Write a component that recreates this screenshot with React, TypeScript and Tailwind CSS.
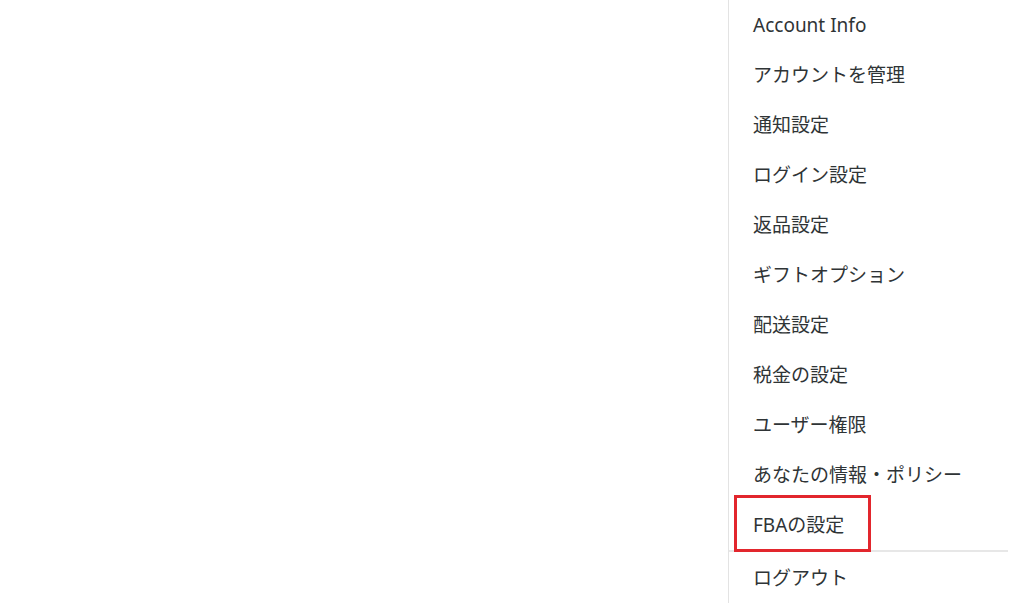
import React from "react";

const items = [
  "Account Info",
  "アカウントを管理",
  "通知設定",
  "ログイン設定",
  "返品設定",
  "ギフトオプション",
  "配送設定",
  "税金の設定",
  "ユーザー権限",
  "あなたの情報・ポリシー",
  "FBAの設定",
];

const App = () => {
  return (
    <div
      className="w-[1024px] h-[603px] overflow-hidden bg-white flex justify-end"
      style={{ fontFamily: '"Noto Sans", "Noto Sans CJK JP", sans-serif' }}
    >
      <nav className="w-[280px] mr-[16px] border-l border-[#e3e3e3] text-[19px] text-[#2f3436]">
        {items.map((label) => (
          <div key={label} className="relative h-[50px] flex items-center pl-[24px]">
            {label === "FBAの設定" && (
              // annotation box around the highlighted item
              <span className="absolute left-[5px] top-[-5px] w-[137px] h-[57px] border-[3px] border-[#e2262d]" />
            )}
            {label}
          </div>
        ))}
        <div className="h-[2px] bg-[#e7e7e7]" />
        <div className="h-[52px] flex items-center pl-[24px]">ログアウト</div>
      </nav>
    </div>
  );
};

export default App;
